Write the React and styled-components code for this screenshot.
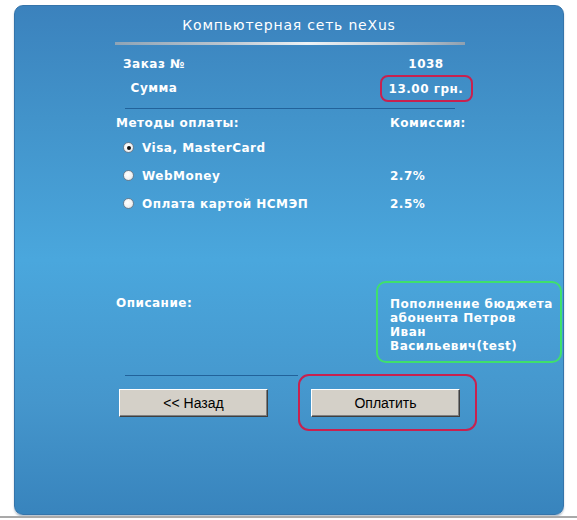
import React from 'react';
import styled, { createGlobalStyle } from 'styled-components';

const Global = createGlobalStyle`
    html, body {
        margin: 0;
        padding: 0;
        background: #ffffff;
    }
    body {
        font-family: "DejaVu Sans", Verdana, sans-serif;
    }
`
const Page = styled.div`
    width: 577px;
    height: 520px;
    position: relative;
    overflow: hidden;
`
const Panel = styled.div`
    box-sizing: border-box;
    width: 550px;
    height: 510px;
    margin: 5px 0 0 14px;
    padding-top: 10px;
    border: 1px solid #3574aa;
    border-radius: 9px;
    background: linear-gradient(to bottom, #3b82bd 0%, #4293ca 22%, #4aa7dd 50%, #4596cc 78%, #3884bd 100%);
    box-shadow: 0 2px 2px rgba(60, 90, 120, 0.35);
    color: #ffffff;
`
const Ground = styled.div`
    position: absolute;
    left: 0;
    right: 0;
    top: 516px;
    height: 2px;
    background: #a9a9a9;
`
const Title = styled.div`
    height: 18px;
    line-height: 18px;
    text-align: center;
    font-size: 14px;
    letter-spacing: 0.8px;
`
const Shine = styled.div`
    width: 350px;
    height: 3px;
    margin: 8px 0 0 100px;
    background: linear-gradient(to right, #8fa4b6 0%, #b9c4ce 30%, #eef3f6 55%, #c7d0d8 80%, #8fa0b0 100%);
`
const Body = styled.div`
    font-size: 12px;
    font-weight: bold;
    letter-spacing: 0.5px;
`
const InfoGrid = styled.div`
    display: grid;
    grid-template-columns: 120px 152px 120px;
    grid-auto-rows: 24px;
    margin: 7px 0 0 79px;
`
const Cell = styled.div`
    display: flex;
    align-items: center;
    justify-content: center;
    grid-column: ${props => props.col};
`
const Value = styled.span`
    display: inline-flex;
    align-items: center;
    justify-content: center;
    box-sizing: border-box;
    ${props => props.marked && `
        width: 93px;
        height: 27px;
        margin-top: 1px;
        border: 2px solid #c8214f;
        border-radius: 8px;
    `}
`
const Rule = styled.div`
    width: ${props => props.w}px;
    height: 1px;
    margin: ${props => props.top}px 0 0 ${props => props.left}px;
    background: #22629a;
`
const Methods = styled.div`
    display: grid;
    grid-template-columns: 274px 1fr;
    grid-template-rows: 19px repeat(3, 28px);
    margin: 6px 0 0 101px;
`
const Head = styled.div`
    display: flex;
    align-items: center;
    height: 16px;
`
const Option = styled.label`
    display: flex;
    align-items: center;
    gap: 8px;
    padding-left: 7px;
`
const Radio = styled.span`
    box-sizing: border-box;
    width: 11px;
    height: 11px;
    border-radius: 50%;
    border: 1px solid #6d7f90;
    background: radial-gradient(circle at 40% 40%, #ffffff 0%, #f2f2f2 55%, #c9ced3 100%);
    display: flex;
    align-items: center;
    justify-content: center;
    margin-top: -1px;

    &::after {
        content: "";
        width: 4px;
        height: 4px;
        border-radius: 50%;
        background: ${props => props.checked ? '#111111' : 'transparent'};
    }
`
const Fee = styled.div`
    display: flex;
    align-items: center;
`
const Describe = styled.div`
    display: grid;
    grid-template-columns: 260px 186px;
    margin: 63px 0 0 101px;
`
const Label = styled.div`
    padding-top: 14px;
    line-height: 16px;
`
const Note = styled.div`
    box-sizing: border-box;
    height: 82px;
    padding: 14px 0 0 12px;
    border: 2px solid #3fe06c;
    border-radius: 10px;
    line-height: 14px;
    white-space: nowrap;
`
const Buttons = styled.div`
    display: flex;
    gap: 43px;
    margin: 13px 0 0 104px;
`
const Button = styled.button`
    position: relative;
    box-sizing: border-box;
    width: 149px;
    height: 28px;
    padding: 0;
    background: #d4d0c8;
    border: 1px solid;
    border-color: #ffffff #404040 #404040 #ffffff;
    box-shadow: inset -1px -1px 0 #808080;
    font-family: "Liberation Sans", Arial, sans-serif;
    font-size: 14px;
    color: #000000;
    cursor: pointer;

    ${props => props.marked && `
        &::before {
            content: "";
            position: absolute;
            left: -14px;
            right: -18px;
            top: -16px;
            bottom: -15px;
            border: 2px solid #c8214f;
            border-radius: 11px;
            pointer-events: none;
        }
    `}
`

const methods = [
    { name: 'Visa, MasterCard', fee: '', checked: true },
    { name: 'WebMoney', fee: '2.7%' },
    { name: 'Оплата картой НСМЭП', fee: '2.5%' },
];

export default function App() {
    return (
        <Page>
            <Global />
            <Panel>
                <Title>Компьютерная сеть neXus</Title>
                <Shine />
                <Body>
                    <InfoGrid>
                        <Cell col={1}>Заказ №</Cell>
                        <Cell col={3}><Value>1038</Value></Cell>
                        <Cell col={1}>Сумма</Cell>
                        <Cell col={3}><Value marked>13.00 грн.</Value></Cell>
                    </InfoGrid>
                    <Rule w={330} top={8} left={110} />
                    <Methods>
                        <Head>Методы оплаты:</Head>
                        <Head>Комиссия:</Head>
                        {methods.map(m => (
                            <React.Fragment key={m.name}>
                                <Option>
                                    <Radio checked={m.checked} />
                                    {m.name}
                                </Option>
                                <Fee>{m.fee}</Fee>
                            </React.Fragment>
                        ))}
                    </Methods>
                    <Describe>
                        <Label>Описание:</Label>
                        <Note>
                            Пополнение бюджета<br />
                            абонента Петров<br />
                            Иван<br />
                            Васильевич(test)
                        </Note>
                    </Describe>
                    <Rule w={173} top={12} left={110} />
                </Body>
                <Buttons>
                    <Button type="button">&lt;&lt; Назад</Button>
                    <Button type="button" marked>Оплатить</Button>
                </Buttons>
            </Panel>
            <Ground />
        </Page>
    );
}
